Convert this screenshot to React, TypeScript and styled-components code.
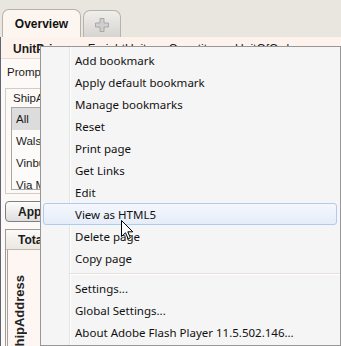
import React from 'react';
import styled, { createGlobalStyle } from 'styled-components';

const GlobalStyle = createGlobalStyle`
  html, body { margin: 0; padding: 0; background: #e8e6df; }
  body { font-family: "Liberation Sans", Arial, sans-serif; color: #1b1b1b; }
`;

const Page = styled.div`
  position: relative;
  width: 341px;
  height: 346px;
  overflow: hidden;
  display: flex;
  flex-direction: column;
`;

const TabBar = styled.div`
  height: 37px;
  box-sizing: border-box;
  padding: 9px 0 0 2px;
  display: flex;
  align-items: flex-end;
  gap: 2px;
  background: #e8e6df;
`;

const Tab = styled.div<{ $active?: boolean }>`
  box-sizing: border-box;
  width: ${(p) => (p.$active ? 79 : 38)}px;
  height: ${(p) => (p.$active ? 28 : 27)}px;
  border: 1px solid #b6b3ad;
  border-bottom: none;
  border-radius: 7px 7px 0 0;
  background: ${(p) => (p.$active ? '#fdf5ef' : 'linear-gradient(#f0efec, #d6d4cf)')};
  display: flex;
  align-items: center;
  justify-content: center;
  font: bold 12px "Liberation Sans", Arial, sans-serif;
  color: #111;
`;

const Content = styled.div`
  flex: 1;
  display: flex;
  flex-direction: column;
  background: #fdf9f7;
  border-left: 1px solid #5f6572;
`;

const HeaderRow = styled.div`
  height: 22px;
  box-sizing: border-box;
  padding: 3px 0 0 12px;
  display: flex;
  align-items: center;
  gap: 22px;
  background: #fdf3ec;
  border-bottom: 1px solid #e6ddd5;
  font: 12px "Liberation Sans", Arial, sans-serif;
  white-space: nowrap;
`;

const HeaderCell = styled.span<{ $bold?: boolean }>`
  font-weight: ${(p) => (p.$bold ? 'bold' : 'normal')};
`;

const PromptRow = styled.div`
  height: 25px;
  padding-left: 6px;
  display: flex;
  align-items: center;
  font-size: 11.5px;
`;

const FilterPanel = styled.div`
  margin: 4px 0 0 4px;
  width: 320px;
  border: 1px solid #d2ccc8;
  padding: 0 0 3px 5px;
`;

const FilterLabel = styled.div`
  height: 18px;
  padding-left: 2px;
  display: flex;
  align-items: center;
  font-size: 11.5px;
`;

const ListBox = styled.div`
  height: 83px;
  width: 200px;
  box-sizing: border-box;
  overflow: hidden;
  border: 1px solid #a9a6a3;
  background: #fcfbfa;
`;

const ListItem = styled.div<{ $selected?: boolean }>`
  height: 22px;
  padding-left: 4px;
  display: flex;
  align-items: center;
  font-size: 11.5px;
  background: ${(p) => (p.$selected ? '#dcdcdc' : 'transparent')};
`;

const ApplyButton = styled.div`
  margin: 7px 0 0 4px;
  width: 90px;
  height: 21px;
  box-sizing: border-box;
  padding-left: 12px;
  border: 1px solid #7f7f7f;
  border-radius: 4px;
  background: linear-gradient(#fdfdfd, #dedede);
  display: flex;
  align-items: center;
  font: bold 12px "Liberation Sans", Arial, sans-serif;
`;

const TablePanel = styled.div`
  margin: 7px 0 0 4px;
  flex: 1;
  display: flex;
  flex-direction: column;
  border: 1px solid #9d9a97;
  border-bottom: none;
`;

const TableHeader = styled.div`
  height: 20px;
  box-sizing: border-box;
  padding-left: 12px;
  display: flex;
  align-items: center;
  background: linear-gradient(#fbfaf8, #ebe7e1);
  border-bottom: 1px solid #bdb8b2;
  font: bold 12px "Liberation Sans", Arial, sans-serif;
`;

const TableBody = styled.div`
  flex: 1;
  display: flex;
  background: #fdf6f3;
`;

const RowHeaderCell = styled.div`
  margin-left: 1px;
  width: 30px;
  padding: 25px 0 0 4px;
  border-left: 1px solid #a3a09d;
  border-right: 1px solid #cfcac6;
`;

const RotatedText = styled.div`
  writing-mode: vertical-rl;
  transform: rotate(180deg);
  font: bold 13px "Liberation Sans", Arial, sans-serif;
  color: #222;
`;

const Menu = styled.div`
  position: absolute;
  left: 40px;
  top: 46px;
  width: 301px;
  height: 300px;
  box-sizing: border-box;
  padding-top: 2px;
  border: 1px solid #979797;
  background:
    linear-gradient(to right, transparent 28px, #e2e3e3 28px, #e2e3e3 29px, #ffffff 29px, #ffffff 30px, transparent 30px),
    #f5f5f5;
  font: 11.5px "Noto Sans", "DejaVu Sans", sans-serif;
  color: #111;
`;

const MenuItem = styled.div<{ $hover?: boolean }>`
  height: 22px;
  box-sizing: border-box;
  margin: 0 3px 0 2px;
  padding-left: 31px;
  display: flex;
  align-items: center;
  white-space: nowrap;
  border: 1px solid ${(p) => (p.$hover ? '#aecbf2' : 'transparent')};
  border-radius: 3px;
  background: ${(p) => (p.$hover ? 'linear-gradient(#f4f7fc, #e6edf9)' : 'transparent')};
`;

const Separator = styled.div`
  height: 1px;
  margin: 4px 0 2px 29px;
  background: #e9dfdc;
  border-bottom: 1px solid #ffffff;
`;

const Cursor = styled.svg`
  position: absolute;
  left: 121px;
  top: 220px;
`;

const PlusIcon = () => (
  <svg width="14" height="15" viewBox="0 0 14 15">
    <path d="M5 1.5h4v4.5h4.5v4h-4.5v4.5h-4v-4.5h-4.5v-4h4.5z" fill="#cfcfcf" stroke="#a8a8a8" />
  </svg>
);

const items = [
  'Add bookmark',
  'Apply default bookmark',
  'Manage bookmarks',
  'Reset',
  'Print page',
  'Get Links',
  'Edit',
  'View as HTML5',
  'Delete page',
  'Copy page',
];

const extraItems = ['Settings...', 'Global Settings...', 'About Adobe Flash Player 11.5.502.146...'];

const listValues = ['All', 'Walsh Road', 'Vinbury Lane', 'Via Monte'];

export default function App() {
  return (
    <Page>
      <GlobalStyle />
      <TabBar>
        <Tab $active>Overview</Tab>
        <Tab><PlusIcon /></Tab>
      </TabBar>
      <Content>
        <HeaderRow>
          <HeaderCell $bold>UnitPrice</HeaderCell>
          <HeaderCell>FreightUnit</HeaderCell>
          <HeaderCell>Quantity</HeaderCell>
          <HeaderCell>UnitOfOrder</HeaderCell>
        </HeaderRow>
        <PromptRow>Prompts</PromptRow>
        <FilterPanel>
          <FilterLabel>ShipAddress</FilterLabel>
          <ListBox>
            {listValues.map((v, i) => (
              <ListItem key={v} $selected={i === 0}>{v}</ListItem>
            ))}
          </ListBox>
        </FilterPanel>
        <ApplyButton>Apply</ApplyButton>
        <TablePanel>
          <TableHeader>Total</TableHeader>
          <TableBody>
            <RowHeaderCell>
              <RotatedText>ShipAddress</RotatedText>
            </RowHeaderCell>
          </TableBody>
        </TablePanel>
      </Content>

      <Menu>
        {items.map((it) => (
          <MenuItem key={it} $hover={it === 'View as HTML5'}>{it}</MenuItem>
        ))}
        <Separator />
        {extraItems.map((it) => (
          <MenuItem key={it}>{it}</MenuItem>
        ))}
      </Menu>

      <Cursor width="13" height="20" viewBox="0 0 13 20">
        <path d="M0.5 0.5L0.5 16.5L4.5 12.8L7.2 18.8L9.4 17.8L6.8 11.8L11.8 11.8Z" fill="#fff" stroke="#000" strokeLinejoin="round" />
      </Cursor>
    </Page>
  );
}
